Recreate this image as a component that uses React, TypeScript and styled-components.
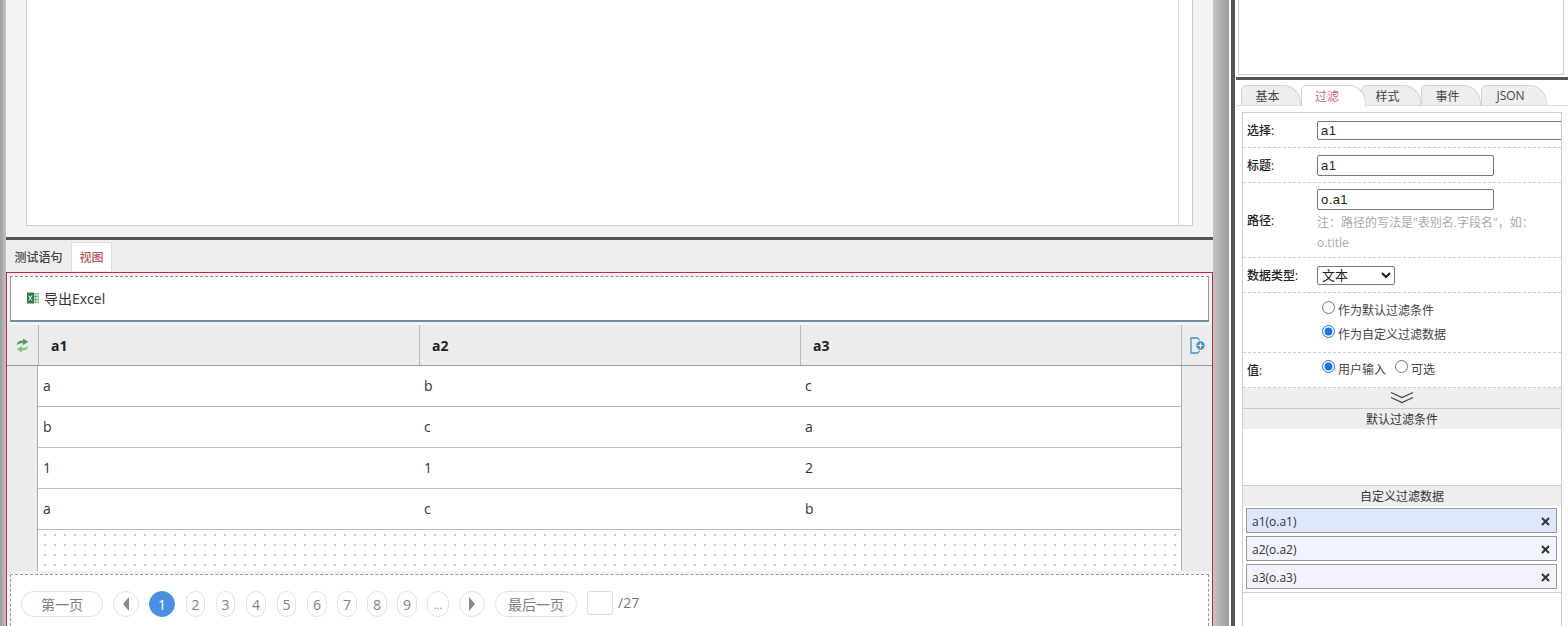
import styled, { createGlobalStyle } from "styled-components";

const GlobalStyle = createGlobalStyle`
	html, body {
		margin: 0;
		padding: 0;
		height: 626px;
		overflow: hidden;
		background: #fff;
		font-family: "Open Sans", "Noto Sans CJK SC", sans-serif;
		font-size: 12px;
		color: #333;
	}
	* {
		box-sizing: border-box;
	}
`;

const Page = styled.div`
	display: flex;
	width: 1568px;
	height: 626px;
	overflow: hidden;
`;

const Gutter = styled.div<{ $w: number; $flip?: boolean }>`
	flex: none;
	width: ${(p) => p.$w}px;
	background: linear-gradient(${(p) => (p.$flip ? "to left" : "to right")}, #c4c4c4, #9c9c9c);
`;

const Main = styled.div`
	flex: none;
	width: 1207px;
	display: flex;
	flex-direction: column;
	background: #f3f3f3;
`;

const EditorArea = styled.div`
	flex: none;
	height: 237px;
	padding: 0 20px 11px 20px;
	display: flex;
`;

const EditorBox = styled.div`
	flex: 1;
	background: #fff;
	border: 1px solid #ccc;
	border-top: 0;
	display: flex;
	justify-content: flex-end;
`;

const EditorScroll = styled.div`
	width: 14px;
	border-left: 1px solid #ddd;
`;

const HeavyLine = styled.div`
	flex: none;
	height: 3px;
	background: #555;
`;

const ResultTabs = styled.div`
	flex: none;
	height: 32px;
	display: flex;
	align-items: stretch;
	background: #eee;
	padding-top: 2px;
`;

const ResultTab = styled.div<{ $active?: boolean }>`
	display: flex;
	align-items: center;
	justify-content: center;
	height: 29px;
	width: ${(p) => (p.$active ? "41px" : "65px")};
	font-size: 12px;
	font-weight: 500;
	background: ${(p) => (p.$active ? "#fff" : "transparent")};
	color: ${(p) => (p.$active ? "#b25a5a" : "#444")};
	border: ${(p) => (p.$active ? "1px solid #ddd" : "0")};
	border-bottom: 0;
`;

const ViewBox = styled.div`
	flex: 1;
	min-height: 0;
	border: 1px solid #c8243a;
	border-bottom: 0;
	display: flex;
	flex-direction: column;
	background: #f3f3f3;
	padding-top: 3px;
`;

const Toolbar = styled.div`
	flex: none;
	height: 46px;
	margin: 0 3px 0 3px;
	background: #fff;
	border: 1px solid #999;
	border-top: 1px dashed #888;
	border-bottom: 2px solid #6d8ba3;
	display: flex;
	align-items: center;
	gap: 5px;
	padding: 0 0 2px 16px;
	font-size: 14px;
	color: #333;
`;

const HeadRow = styled.div`
	flex: none;
	height: 41px;
	margin-top: 3px;
	display: grid;
	grid-template-columns: 31px 381px 381px 381px 31px;
	background: #ececec;
	border-bottom: 1px solid #999;
`;

const HeadSide = styled.div`
	display: flex;
	align-items: center;
	justify-content: center;
`;

const HeadCell = styled.div`
	display: flex;
	align-items: center;
	padding-left: 12px;
	font-size: 14px;
	font-weight: 700;
	color: #222;
	border-left: 1px solid #bbb;
`;

const LastHeadCell = styled(HeadSide)`
	border-left: 1px solid #bbb;
	padding-top: 1px;
`;

const Body = styled.div`
	flex: none;
	height: 205px;
	display: grid;
	grid-template-columns: 30px 1fr 30px;
	background: #ececec;
`;

const BodyMiddle = styled.div`
	background: #fff;
	border-left: 1px solid #aaa;
	border-right: 1px solid #aaa;
	display: flex;
	flex-direction: column;
`;

const Row = styled.div`
	flex: none;
	height: 41px;
	display: grid;
	grid-template-columns: 381px 381px 1fr;
	border-bottom: 1px solid #bbb;
`;

const Cell = styled.div`
	display: flex;
	align-items: center;
	padding: 0 0 2px 5px;
	font-size: 14px;
	color: #333;
`;

const Dots = styled.div`
	flex: 1;
	background-color: #fff;
	background-image:
		radial-gradient(circle at 5px 5px, #c4c4c4 0.7px, transparent 0.8px),
		radial-gradient(circle at 5px 5px, #e8e8e8 0.6px, transparent 0.7px);
	background-size: 10px 10px, 5px 5px;
	background-position: 2px 0, 2px 0;
`;

const Pager = styled.div`
	flex: 1;
	margin: 3px 3px 0 3px;
	background: #fff;
	border: 1px dashed #999;
	border-bottom: 0;
	display: flex;
	align-items: flex-start;
	padding: 16px 0 0 10px;
	color: #777;
	font-size: 14px;
`;

const PageBtn = styled.div<{ $w: number; $gap: number; $current?: boolean; $small?: boolean }>`
	flex: none;
	width: ${(p) => p.$w}px;
	height: 26px;
	margin-right: ${(p) => p.$gap}px;
	border-radius: 13px;
	border: 1px solid ${(p) => (p.$current ? "#4a90e2" : "#e2e2e2")};
	background: ${(p) => (p.$current ? "#4a90e2" : "#fff")};
	color: ${(p) => (p.$current ? "#fff" : "#808080")};
	display: flex;
	align-items: center;
	justify-content: center;
	font-size: ${(p) => (p.$small ? 11 : 14)}px;
`;

const Triangle = styled.span<{ $dir: "left" | "right" }>`
	width: 0;
	height: 0;
	border-top: 7px solid transparent;
	border-bottom: 7px solid transparent;
	border-${(p) => (p.$dir === "left" ? "right" : "left")}: 6px solid #888;
`;

const PageInput = styled.div`
	flex: none;
	width: 26px;
	height: 24px;
	border: 1px solid #ddd;
	border-radius: 3px;
	margin: 0 5px 0 0;
`;

const Total = styled.span`
	line-height: 24px;
	color: #777;
`;

const SideWrap = styled.div`
	flex: none;
	display: flex;
	width: 339px;
	background: #fff;
`;

const DarkBar = styled.div`
	flex: none;
	width: 4px;
	margin-left: 2px;
	background: #555;
`;

const Side = styled.div`
	flex: none;
	width: 332px;
	margin-left: 1px;
	display: flex;
	flex-direction: column;
	background: #fff;
`;

const PreviewBox = styled.div`
	flex: none;
	height: 75px;
	margin: 0 4px 0 2px;
	border: 1px solid #ccc;
	border-top: 0;
`;

const SideLine = styled.div`
	flex: none;
	height: 3px;
	margin-top: 2px;
	background: #555;
`;

const SideTabs = styled.div`
	flex: none;
	height: 26px;
	padding: 5px 0 0 5px;
	border-bottom: 1px solid #ddd;
	display: flex;
`;

const SideTab = styled.div<{ $w: number; $active?: boolean }>`
	flex: none;
	width: ${(p) => p.$w}px;
	height: ${(p) => (p.$active ? 21 : 20)}px;
	margin-right: ${(p) => (p.$active ? -5 : 0)}px;
	position: relative;
	z-index: ${(p) => (p.$active ? 1 : 0)};
	display: flex;
	align-items: center;
	justify-content: center;
	padding-right: ${(p) => (p.$active ? 13 : 7)}px;
	font-size: 12px;
	color: ${(p) => (p.$active ? "#c96a6a" : "#444")};
	background: ${(p) => (p.$active ? "#fff" : "#eee")};
	border: 1px solid #d4d4d4;
	border-bottom: 0;
	border-radius: 5px 18px 0 0;
`;

const Form = styled.div`
	flex: 1;
	min-height: 0;
	margin: 6px 6px 0 6px;
	border: 1px solid #ccc;
	border-bottom: 0;
	display: flex;
	flex-direction: column;
	overflow: hidden;
`;

const FormRow = styled.div<{ $h: number }>`
	flex: none;
	height: ${(p) => p.$h}px;
	display: flex;
	align-items: center;
	border-bottom: 1px dashed #ccc;
	padding-left: 4px;
`;

const FormLabel = styled.div`
	flex: none;
	width: 70px;
	font-size: 12px;
	font-weight: 500;
	color: #222;
`;

const FormField = styled.div`
	flex: 1;
	min-width: 0;
	display: flex;
	flex-direction: column;
`;

const PathField = styled(FormField)`
	margin-top: 2px;
`;

const ModeField = styled(FormField)`
	margin-bottom: 2px;
`;

const TextInput = styled.input<{ $wide?: boolean }>`
	width: ${(p) => (p.$wide ? "260px" : "177px")};
	height: ${(p) => (p.$wide ? "19px" : "21px")};
	padding: 0 3px;
	border: 1px solid #767676;
	border-radius: ${(p) => (p.$wide ? "2px 0 0 2px" : "2px")};
	font-family: "Liberation Sans", sans-serif;
	font-size: 13px;
	letter-spacing: 0.4px;
	color: #222;
	background: #fff;
	outline: none;
`;

const Note = styled.div`
	width: 225px;
	margin-top: 3px;
	font-size: 12px;
	line-height: 20px;
	color: #aaa;
`;

const TypeSelect = styled.select`
	width: 78px;
	height: 19px;
	padding: 0;
	border: 1px solid #767676;
	border-radius: 2px;
	background: #fff;
	font-family: "Liberation Sans", "Noto Sans CJK SC", sans-serif;
	font-size: 13px;
	color: #222;
`;

const RadioLine = styled.label`
	display: flex;
	align-items: center;
	height: 24px;
	font-size: 12px;
	color: #444;
`;

const RadioInline = styled.div`
	display: flex;
	gap: 4px;
	margin-bottom: 2px;
`;

const Radio = styled.input.attrs({ type: "radio" })`
	width: 13px;
	height: 13px;
	margin: 0 3px 5px 5px;
	accent-color: #1a73e8;
`;

const Collapse = styled.div`
	flex: none;
	height: 21px;
	background: #eee;
	border-bottom: 1px solid #ccc;
	display: flex;
	align-items: center;
	justify-content: center;
`;

const GroupTitle = styled.div`
	flex: none;
	height: 20px;
	background: #eee;
	display: flex;
	align-items: center;
	justify-content: center;
	font-size: 12px;
	color: #333;
`;

const EmptyGroup = styled.div`
	flex: none;
	height: 57px;
	border-bottom: 1px solid #ccc;
`;

const ItemList = styled.div`
	flex: none;
	height: 87px;
	padding: 2px 4px 0 3px;
	border-bottom: 1px solid #ccc;
	display: flex;
	flex-direction: column;
	gap: 3px;
`;

const Item = styled.div<{ $selected?: boolean }>`
	flex: none;
	height: 25px;
	display: flex;
	align-items: center;
	justify-content: space-between;
	padding: 1px 6px 0 5px;
	font-size: 12px;
	color: #333;
	border: 1px solid #999;
	background: ${(p) => (p.$selected ? "#dfe7fb" : "#f1f4fe")};
`;

function ExcelIcon() {
	return (
		<svg width="12" height="12" viewBox="0 0 12 12">
			<rect x="5" y="1.5" width="7" height="9" fill="#cfe3d2" stroke="#5a9a6c" strokeWidth="0.6" />
			<path d="M8.5 2v8M5 4.5h7M5 7.5h7" stroke="#5a9a6c" strokeWidth="0.6" />
			<rect x="0" y="0.5" width="7" height="11" fill="#2e7d46" />
			<path d="M1.8 3.5l3 5M4.8 3.5l-3 5" stroke="#fff" strokeWidth="1" />
		</svg>
	);
}

function SwapIcon() {
	return (
		<svg width="13" height="15" viewBox="0 0 12 14" fill="none">
			<path d="M.6 6.800C1 3.500 3 2.300 6.500 2.400V.4L11.400 3.600 6.500 6.800V4.800C4 4.700 2 5.200.6 6.800z" fill="#4f9f58" />
			<path d="M11.400 7.200C11 10.500 9 11.700 5.500 11.600v2L.6 10.400 5.500 7.200v2C8 9.300 10 8.800 11.400 7.200z" fill="#86c088" />
		</svg>
	);
}

function AddColumnIcon() {
	return (
		<svg width="15" height="17" viewBox="0 0 15 17" fill="none">
			<path d="M8 1H1v15h7" stroke="#4a90c2" strokeWidth="1.3" />
			<path d="M8 1l1.500 2.500M8 16l1.500-2.500" stroke="#4a90c2" strokeWidth="1.2" />
			<circle cx="10.500" cy="8.500" r="4.200" fill="#4a90c2" />
			<path d="M8.300 8.500h4.400M10.500 6.300v4.400" stroke="#fff" strokeWidth="1.200" />
		</svg>
	);
}

function DoubleChevron() {
	return (
		<svg width="26" height="14" viewBox="0 0 26 14" fill="none" stroke="#444" strokeWidth="1.2">
			<path d="M2 1.500l11 5 11-5" />
			<path d="M2 6.500l11 5 11-5" />
		</svg>
	);
}

function CloseIcon() {
	return (
		<svg width="9" height="9" viewBox="0 0 9 9" stroke="#333" strokeWidth="2">
			<path d="M1 1l7 7M8 1L1 8" />
		</svg>
	);
}

const rows = [
	["a", "b", "c"],
	["b", "c", "a"],
	["1", "1", "2"],
	["a", "c", "b"],
];

const pages = [
	{ label: "2", w: 19, gap: 11 },
	{ label: "3", w: 19, gap: 11 },
	{ label: "4", w: 20, gap: 11 },
	{ label: "5", w: 19, gap: 11 },
	{ label: "6", w: 20, gap: 10 },
	{ label: "7", w: 20, gap: 10 },
	{ label: "8", w: 20, gap: 10 },
	{ label: "9", w: 20, gap: 10 },
];

export default function App() {
	return (
		<Page>
			<GlobalStyle />
			<Gutter $w={6} $flip />
			<Main>
				<EditorArea>
					<EditorBox>
						<EditorScroll />
					</EditorBox>
				</EditorArea>
				<HeavyLine />
				<ResultTabs>
					<ResultTab>测试语句</ResultTab>
					<ResultTab $active>视图</ResultTab>
				</ResultTabs>
				<ViewBox>
					<Toolbar>
						<ExcelIcon />
						<span>导出Excel</span>
					</Toolbar>
					<HeadRow>
						<HeadSide>
							<SwapIcon />
						</HeadSide>
						<HeadCell>a1</HeadCell>
						<HeadCell>a2</HeadCell>
						<HeadCell>a3</HeadCell>
						<LastHeadCell>
							<AddColumnIcon />
						</LastHeadCell>
					</HeadRow>
					<Body>
						<div />
						<BodyMiddle>
							{rows.map((row, i) => (
								<Row key={i}>
									{row.map((v, j) => (
										<Cell key={j}>{v}</Cell>
									))}
								</Row>
							))}
							<Dots />
						</BodyMiddle>
						<div />
					</Body>
					<Pager>
						<PageBtn $w={82} $gap={10}>第一页</PageBtn>
						<PageBtn $w={26} $gap={10}>
							<Triangle $dir="left" />
						</PageBtn>
						<PageBtn $w={26} $gap={11} $current>1</PageBtn>
						{pages.map((p) => (
							<PageBtn key={p.label} $w={p.w} $gap={p.gap}>{p.label}</PageBtn>
						))}
						<PageBtn $w={22} $gap={10} $small>...</PageBtn>
						<PageBtn $w={26} $gap={10}>
							<Triangle $dir="right" />
						</PageBtn>
						<PageBtn $w={82} $gap={10}>最后一页</PageBtn>
						<PageInput />
						<Total>/27</Total>
					</Pager>
				</ViewBox>
			</Main>
			<Gutter $w={16} />
			<SideWrap>
				<DarkBar />
				<Side>
					<PreviewBox />
					<SideLine />
					<SideTabs>
						<SideTab $w={60}>基本</SideTab>
						<SideTab $w={65} $active>过滤</SideTab>
						<SideTab $w={60}>样式</SideTab>
						<SideTab $w={60}>事件</SideTab>
						<SideTab $w={66}>JSON</SideTab>
					</SideTabs>
					<Form>
						<FormRow $h={35}>
							<FormLabel>选择:</FormLabel>
							<FormField>
								<TextInput $wide defaultValue="a1" />
							</FormField>
						</FormRow>
						<FormRow $h={35}>
							<FormLabel>标题:</FormLabel>
							<FormField>
								<TextInput defaultValue="a1" />
							</FormField>
						</FormRow>
						<FormRow $h={75}>
							<FormLabel>路径:</FormLabel>
							<PathField>
								<TextInput defaultValue="o.a1" />
								<Note>注：路径的写法是"表别名.字段名"，如：o.title</Note>
							</PathField>
						</FormRow>
						<FormRow $h={35}>
							<FormLabel>数据类型:</FormLabel>
							<FormField>
								<TypeSelect defaultValue="text">
									<option value="text">文本</option>
								</TypeSelect>
							</FormField>
						</FormRow>
						<FormRow $h={60}>
							<FormLabel />
							<ModeField>
								<RadioLine>
									<Radio name="mode" />
									作为默认过滤条件
								</RadioLine>
								<RadioLine>
									<Radio name="mode" defaultChecked />
									作为自定义过滤数据
								</RadioLine>
							</ModeField>
						</FormRow>
						<FormRow $h={35}>
							<FormLabel>值:</FormLabel>
							<FormField>
								<RadioInline>
									<RadioLine>
										<Radio name="value" defaultChecked />
										用户输入
									</RadioLine>
									<RadioLine>
										<Radio name="value" />
										可选
									</RadioLine>
								</RadioInline>
							</FormField>
						</FormRow>
						<Collapse>
							<DoubleChevron />
						</Collapse>
						<GroupTitle>默认过滤条件</GroupTitle>
						<EmptyGroup />
						<GroupTitle>自定义过滤数据</GroupTitle>
						<ItemList>
							<Item $selected>
								a1(o.a1)
								<CloseIcon />
							</Item>
							<Item>
								a2(o.a2)
								<CloseIcon />
							</Item>
							<Item>
								a3(o.a3)
								<CloseIcon />
							</Item>
						</ItemList>
					</Form>
				</Side>
			</SideWrap>
		</Page>
	);
}
